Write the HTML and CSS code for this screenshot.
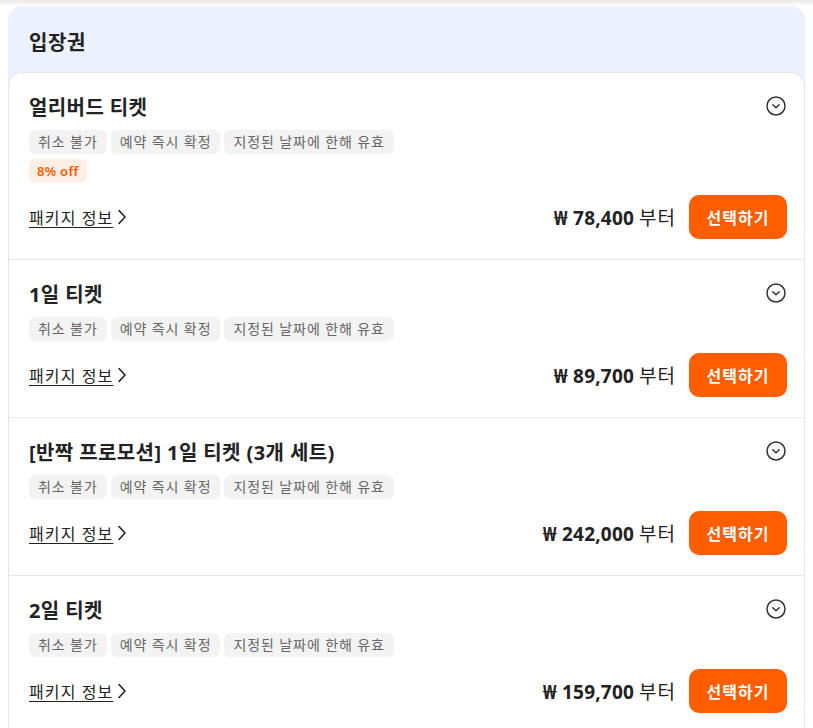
FILE: index.html
```html
<!DOCTYPE html>
<html lang="ko">
<head>
<meta charset="utf-8">
<title>입장권</title>
<link rel="stylesheet" href="styles.css">
</head>
<body>
<div class="topbar"></div>
<main class="page">
  <section class="panel">
    <h2 class="panel-title">입장권</h2>
    <div class="card">
      <div class="row">
        <div class="title-row">
          <h3 class="title">얼리버드 티켓</h3>
          <svg class="toggle" width="20" height="20" viewBox="0 0 20 20"><circle cx="10" cy="10" r="9" fill="none" stroke="#333" stroke-width="1.5"/><path d="M6.8 8.8 L10 11.8 L13.2 8.8" fill="none" stroke="#333" stroke-width="1.5" stroke-linecap="round" stroke-linejoin="round"/></svg>
        </div>
        <div class="tags">
          <span class="tag">취소 불가</span>
          <span class="tag">예약 즉시 확정</span>
          <span class="tag">지정된 날짜에 한해 유효</span>
        </div>
        <div class="badges">
          <span class="tag tag-off">8% off</span>
        </div>
        <div class="bottom">
          <a class="info">패키지 정보<svg width="10" height="16" viewBox="0 0 10 16"><path d="M2 1.5 L8 8 L2 14.5" fill="none" stroke="#222" stroke-width="1.6" stroke-linecap="round" stroke-linejoin="round"/></svg></a>
          <div class="buy">
            <span class="price"><b>₩ 78,400</b> <span class="from">부터</span></span>
            <button class="btn">선택하기</button>
          </div>
        </div>
      </div>
      <div class="row">
        <div class="title-row">
          <h3 class="title">1일 티켓</h3>
          <svg class="toggle" width="20" height="20" viewBox="0 0 20 20"><circle cx="10" cy="10" r="9" fill="none" stroke="#333" stroke-width="1.5"/><path d="M6.8 8.8 L10 11.8 L13.2 8.8" fill="none" stroke="#333" stroke-width="1.5" stroke-linecap="round" stroke-linejoin="round"/></svg>
        </div>
        <div class="tags">
          <span class="tag">취소 불가</span>
          <span class="tag">예약 즉시 확정</span>
          <span class="tag">지정된 날짜에 한해 유효</span>
        </div>
        <div class="bottom">
          <a class="info">패키지 정보<svg width="10" height="16" viewBox="0 0 10 16"><path d="M2 1.5 L8 8 L2 14.5" fill="none" stroke="#222" stroke-width="1.6" stroke-linecap="round" stroke-linejoin="round"/></svg></a>
          <div class="buy">
            <span class="price"><b>₩ 89,700</b> <span class="from">부터</span></span>
            <button class="btn">선택하기</button>
          </div>
        </div>
      </div>
      <div class="row">
        <div class="title-row">
          <h3 class="title">[반짝 프로모션] 1일 티켓 (3개 세트)</h3>
          <svg class="toggle" width="20" height="20" viewBox="0 0 20 20"><circle cx="10" cy="10" r="9" fill="none" stroke="#333" stroke-width="1.5"/><path d="M6.8 8.8 L10 11.8 L13.2 8.8" fill="none" stroke="#333" stroke-width="1.5" stroke-linecap="round" stroke-linejoin="round"/></svg>
        </div>
        <div class="tags">
          <span class="tag">취소 불가</span>
          <span class="tag">예약 즉시 확정</span>
          <span class="tag">지정된 날짜에 한해 유효</span>
        </div>
        <div class="bottom">
          <a class="info">패키지 정보<svg width="10" height="16" viewBox="0 0 10 16"><path d="M2 1.5 L8 8 L2 14.5" fill="none" stroke="#222" stroke-width="1.6" stroke-linecap="round" stroke-linejoin="round"/></svg></a>
          <div class="buy">
            <span class="price"><b>₩ 242,000</b> <span class="from">부터</span></span>
            <button class="btn">선택하기</button>
          </div>
        </div>
      </div>
      <div class="row row-last">
        <div class="title-row">
          <h3 class="title">2일 티켓</h3>
          <svg class="toggle" width="20" height="20" viewBox="0 0 20 20"><circle cx="10" cy="10" r="9" fill="none" stroke="#333" stroke-width="1.5"/><path d="M6.8 8.8 L10 11.8 L13.2 8.8" fill="none" stroke="#333" stroke-width="1.5" stroke-linecap="round" stroke-linejoin="round"/></svg>
        </div>
        <div class="tags">
          <span class="tag">취소 불가</span>
          <span class="tag">예약 즉시 확정</span>
          <span class="tag">지정된 날짜에 한해 유효</span>
        </div>
        <div class="bottom">
          <a class="info">패키지 정보<svg width="10" height="16" viewBox="0 0 10 16"><path d="M2 1.5 L8 8 L2 14.5" fill="none" stroke="#222" stroke-width="1.6" stroke-linecap="round" stroke-linejoin="round"/></svg></a>
          <div class="buy">
            <span class="price"><b>₩ 159,700</b> <span class="from">부터</span></span>
            <button class="btn">선택하기</button>
          </div>
        </div>
      </div>
    </div>
  </section>
</main>
</body>
</html>
```

FILE: styles.css
```css
* { box-sizing: border-box; }
html, body { margin: 0; padding: 0; background: #fff; }
body {
  font-family: "Noto Sans", "Noto Sans CJK KR", sans-serif;
  color: #222;
  overflow: hidden;
  height: 728px;
}
.topbar {
  height: 5px;
  background: linear-gradient(to bottom, #e8e8e8, #fbfbfb);
}
.page {
  padding: 1px 8px 0 8px;
}
.panel {
  background: #ebf2fd;
  border-radius: 14px 14px 0 0;
}
.panel-title {
  margin: 0;
  height: 66px;
  padding: 5px 21px 0 21px;
  display: flex;
  align-items: center;
  font-size: 20px;
  letter-spacing: 0.6px;
  font-weight: 700;
  color: #222;
}
.card {
  background: #fff;
  border: 1px solid #e2e5ea;
  border-bottom: none;
  border-radius: 14px 14px 0 0;
  height: 656px;
  overflow: hidden;
}
.row {
  padding: 23px 17px 20px 20px;
  border-bottom: 1px solid #e6e6e6;
}
.row-last { border-bottom: none; padding-bottom: 14px; }
.title-row {
  display: flex;
  justify-content: space-between;
  align-items: center;
}
.title {
  margin: 0;
  font-size: 20px;
  letter-spacing: 0.4px;
  line-height: 24px;
  font-weight: 700;
  color: #222;
}
.toggle { margin-top: -5px; margin-right: 1px; }
.tags {
  margin-top: 10px;
  display: flex;
  flex-wrap: wrap;
  gap: 5px 4px;
}
.badges {
  margin-top: 5px;
  display: flex;
  gap: 4px;
}
.tag {
  height: 24px;
  line-height: 24px;
  padding: 0 9px;
  border-radius: 6px;
  background: #f3f3f4;
  color: #666;
  font-size: 14px;
  letter-spacing: 0.9px;
}
.tag-off {
  background: #ffeee3;
  color: #ff5a00;
  font-weight: 600;
  font-size: 13px;
  letter-spacing: 0.3px;
  padding: 0 8px;
}
.bottom {
  margin-top: 12px;
  display: flex;
  justify-content: space-between;
  align-items: center;
}
.info {
  display: flex;
  align-items: center;
  gap: 4px;
  font-size: 16px;
  letter-spacing: 1.1px;
  color: #222;
  text-decoration: underline;
  text-underline-offset: 3px;
  text-decoration-thickness: 1px;
}
.buy {
  display: flex;
  align-items: center;
  gap: 13px;
}
.price {
  font-size: 19px;
  color: #222;
}
.price b { font-weight: 700; letter-spacing: 0.2px; }
.from { letter-spacing: 1px; }
.btn {
  width: 98px;
  height: 44px;
  border: none;
  border-radius: 10px;
  background: #ff5e00;
  color: #fff;
  font-family: inherit;
  font-size: 16px;
  letter-spacing: 1px;
  font-weight: 700;
  padding: 0;
}
```
